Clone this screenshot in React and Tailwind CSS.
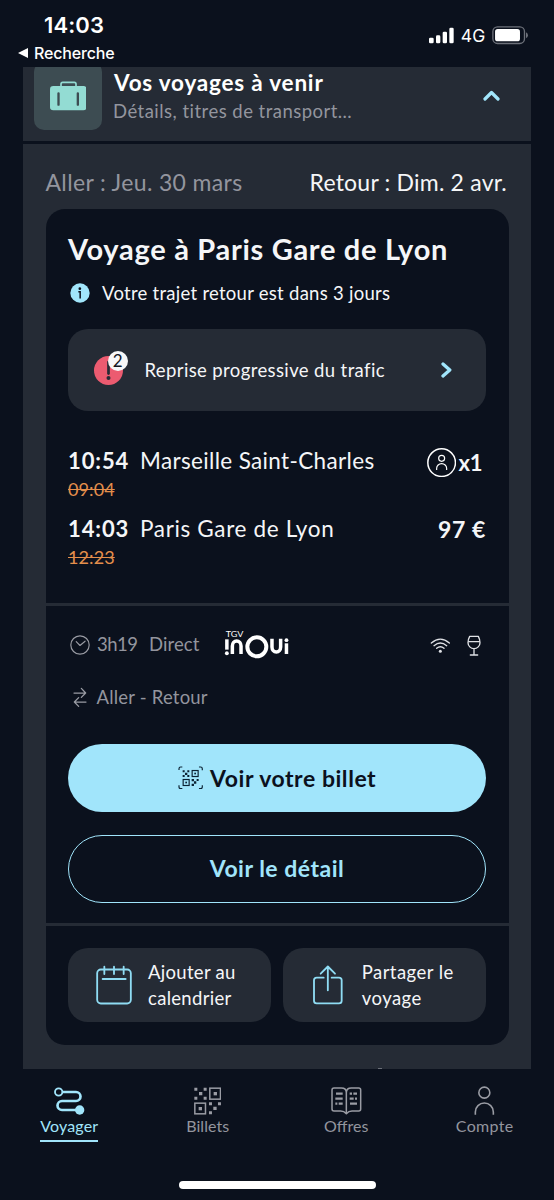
import React from "react";

function SuitcaseIcon() {
  return (
    <svg viewBox="150 242 110 90" className="h-[30px] w-[36.7px]">
      <rect x="183" y="246" width="45" height="24" rx="5" fill="none" stroke="#93dcd3" strokeWidth="5" />
      <rect x="150" y="257" width="110" height="73" rx="10" fill="#93dcd3" />
      <path d="M188 254h35" stroke="#3d4c52" strokeWidth="5" />
      <path d="M175.500 279v34M233.500 279v34" stroke="#3d4c52" strokeWidth="7" strokeLinecap="round" />
    </svg>
  );
}

function StatusIcons() {
  return (
    <div className="flex items-center">
      <svg viewBox="456 80 75 50" className="h-[16.7px] w-[25px]" fill="#fff">
        <rect x="456" y="112" width="14" height="17" rx="4" />
        <rect x="477" y="105" width="13" height="24" rx="4" />
        <rect x="497" y="94" width="13" height="35" rx="4" />
        <rect x="517" y="82" width="13" height="47" rx="4" />
      </svg>
      <span className="ml-[7px] font-['Inter',sans-serif] text-[17.5px] leading-5 tracking-[0.1px]">4G</span>
      <svg viewBox="645 78 110 55" className="ml-[6.5px] h-[18.3px] w-[36.7px]">
        <rect x="647.500" y="80.500" width="95" height="50" rx="14" fill="none" stroke="#6c7079" strokeWidth="4" />
        <rect x="654" y="87" width="75" height="37" rx="8" fill="#fff" />
        <path d="M747 97q6 3 6 9t-6 9z" fill="#6c7079" />
      </svg>
    </div>
  );
}

function InfoIcon() {
  return (
    <svg viewBox="0 0 60 60" className="h-5 w-5">
      <circle cx="30" cy="30" r="29" fill="#a1e5fb" />
      <circle cx="29.500" cy="17" r="4" fill="#0b111d" />
      <path d="M25 26.500h5.500v20" fill="none" stroke="#0b111d" strokeWidth="4.500" />
    </svg>
  );
}

function AlertIcon() {
  return (
    <div className="relative h-[29px] w-[29px]">
      <svg viewBox="0 0 86 86" className="h-[29px] w-[29px]">
        <circle cx="43" cy="43" r="43" fill="#ec5b70" />
        <path d="M43 18v34" stroke="#252b35" strokeWidth="8" strokeLinecap="round" />
        <circle cx="43" cy="65" r="6" fill="#252b35" />
      </svg>
      <span className="absolute -top-[4.5px] left-[14.5px] flex h-[19.500px] w-[19.500px] items-center justify-center rounded-full bg-[#f7f7f8] text-[17px] leading-none text-[#12161f]">2</span>
    </div>
  );
}

function PassengerIcon() {
  return (
    <svg viewBox="450 384 88 88" className="h-[29.3px] w-[29.3px]" fill="none" stroke="#fff">
      <circle cx="494" cy="428" r="41.500" strokeWidth="4.500" />
      <circle cx="494" cy="415" r="9" strokeWidth="3.500" />
      <path d="M479 450v-5a15 14 0 0 1 30 0v5" strokeWidth="3.500" />
    </svg>
  );
}

function ClockIcon() {
  return (
    <svg viewBox="148 105 61 61" className="h-5 w-5" fill="none" stroke="#9a9ca4" strokeWidth="3.500">
      <circle cx="178.500" cy="135.500" r="28" />
      <path d="M167 125l11.500 12L194 124" strokeLinecap="round" strokeLinejoin="round" />
    </svg>
  );
}

function SwapIcon() {
  return (
    <svg viewBox="158 262 42 62" className="h-[20.7px] w-[14px]" fill="none" stroke="#9a9ca4" strokeWidth="3.800" strokeLinecap="round" strokeLinejoin="round">
      <path d="M161 280h35M183 266l13 14-13 13M197 307h-35M175 294l-13 13 13 13" />
    </svg>
  );
}

function InouiLogo() {
  return (
    <svg viewBox="612 90 198 88" className="h-[29.3px] w-[66px]" fill="none" stroke="#fff" strokeWidth="10.500">
      <text x="617" y="111" fontSize="23.500" textLength="53" lengthAdjust="spacingAndGlyphs" fontFamily="Lato, sans-serif" fill="#fff" stroke="none">TGV</text>
      <path d="M620.500 118v31" />
      <circle cx="620.500" cy="160" r="5.800" fill="#fff" stroke="none" />
      <path d="M637 162v-24a13 15 0 0 1 26 0v24" />
      <circle cx="710.500" cy="140.500" r="28.500" strokeWidth="12" />
      <path d="M756 116v25a13 15 0 0 0 26 0v-25" />
      <path d="M799.500 130v32" />
      <circle cx="799.500" cy="120.500" r="5.800" fill="#fff" stroke="none" />
    </svg>
  );
}

function WifiIcon() {
  return (
    <svg viewBox="120 110 62 50" className="h-[16.7px] w-[20.7px]" fill="none" stroke="#dfe1e5" strokeWidth="4" strokeLinecap="round">
      <path d="M124 128q27-23 54 0M132 136q19-16 38 0M140 144q11-10 22 0" />
      <circle cx="151" cy="153" r="4.500" fill="#dfe1e5" stroke="none" />
    </svg>
  );
}

function GlassIcon() {
  return (
    <svg viewBox="231 103 42 64" className="h-[21.3px] w-[14px]" fill="none" stroke="#dfe1e5" strokeWidth="4" strokeLinecap="round" strokeLinejoin="round">
      <path d="M239 107h26q5 9 5 19a18 18 0 0 1-36 0q0-10 5-19zM235 123h34M252 145v18M241 163h22" />
    </svg>
  );
}

function QrIcon() {
  return (
    <svg viewBox="582 79 82 84" className="h-7 w-[27.3px]" fill="#9a9ca4">
      <path d="M583 81h9v9h-9zM611 81h9v9h-9zM597 94h10v10h-10zM583 108h9v9h-9zM611 108h9v9h-9z" />
      <rect x="629.500" y="82.500" width="32" height="33" fill="none" stroke="#9a9ca4" strokeWidth="4.500" />
      <rect x="641" y="94" width="10" height="10" />
      <rect x="584.500" y="127.500" width="32" height="32" fill="none" stroke="#9a9ca4" strokeWidth="4.500" />
      <rect x="596" y="139" width="10" height="10" />
      <path d="M627 125h9v9h-9zM654 125h9v9h-9zM640 138h10v10h-10zM627 152h9v9h-9z" />
    </svg>
  );
}

function ScanIcon() {
  return (
    <svg viewBox="415 110 76 71" className="h-[23.7px] w-[25.3px] text-[#0b2233]">
      <path d="M418 122v-4q0-5 5-5h5M478 113h5q5 0 5 5v5M418 168v5q0 5 5 5h5M478 178h5q5 0 5-5v-5" fill="none" stroke="currentColor" strokeWidth="3.500" />
      <g fill="currentColor">
        <path d="M429 123h6v6h-6zM443 123h6v6h-6zM436 130h7v7h-7zM429 137h6v6h-6zM443 137h6v6h-6z" />
        <rect x="457.500" y="123.500" width="18" height="18" fill="none" stroke="currentColor" strokeWidth="3.500" />
        <rect x="464" y="130" width="5" height="5" />
        <rect x="430.500" y="150.500" width="18" height="18" fill="none" stroke="currentColor" strokeWidth="3.500" />
        <rect x="437" y="157" width="5" height="5" />
        <path d="M456 149h7v7h-7zM471 149h6v6h-6zM463 156h7v7h-7zM456 163h7v7h-7z" />
      </g>
    </svg>
  );
}

function CalendarIcon() {
  return (
    <svg viewBox="227 153 108 119" className="h-[39.7px] w-9" fill="none" stroke="#8fdcf3" strokeWidth="5.500" strokeLinecap="round">
      <rect x="230.500" y="166.500" width="101" height="102" rx="11" />
      <path d="M252 158v22M281 158v22M310 158v22M247 195h69" />
    </svg>
  );
}

function ShareIcon() {
  return (
    <svg viewBox="109 153 90 119" className="h-[39.7px] w-[30px]" fill="none" stroke="#8fdcf3" strokeWidth="5.500" strokeLinecap="round" strokeLinejoin="round">
      <path d="M141 191h-21q-8 0-8 8v61q0 8 8 8h67q8 0 8-8v-61q0-8-8-8h-22M153.500 229v-71M132 179l21.500-21.500L175 179" />
    </svg>
  );
}

function RouteIcon() {
  return (
    <svg viewBox="162 79 92 84" className="h-7 w-[30.7px]" fill="none" stroke="#a1e5fb">
      <circle cx="176" cy="94" r="11" strokeWidth="5.500" />
      <path d="M187 94h41a13.500 13.500 0 0 1 0 27h-42a13.500 13.500 0 0 0 0 27h45" strokeWidth="8" />
      <circle cx="239" cy="148" r="14" fill="#a1e5fb" stroke="none" />
    </svg>
  );
}

function BookIcon() {
  return (
    <svg viewBox="162 79 92 84" className="h-7 w-[30.7px]" fill="none" stroke="#9a9ca4" strokeWidth="4.500">
      <path d="M208 159q-7-8-17-8h-20q-6 0-6-6v-57q0-6 6-6h22q15 0 15 14 0-14 15-14h22q6 0 6 6v57q0 6-6 6h-20q-10 0-17 8zM208 96v62" strokeLinejoin="round" />
      <path d="M177 99h20M175 114h22M175 129h6M185 129h12M218 99h7M229 99h11M218 114h12M234 114h6M219 129h21" strokeWidth="6.500" />
    </svg>
  );
}

function AccountIcon() {
  return (
    <svg viewBox="592 77 62 87" className="h-[29px] w-[20.7px]" fill="none" stroke="#9a9ca4" strokeWidth="4.800">
      <circle cx="623" cy="97" r="16.500" />
      <path d="M596 163v-8a27 27 0 0 1 54 0v8" />
    </svg>
  );
}

function NavItem({ icon, label, labelClass }) {
  return (
    <div className="flex flex-col items-center pt-[17px]">
      <div className="flex h-[29px] items-center">{icon}</div>
      <span className={labelClass}>{label}</span>
    </div>
  );
}

export default function App() {
  return (
    <div className="flex h-[1200px] w-[554px] flex-col overflow-hidden bg-[#0b111d] font-['Lato',sans-serif] text-[#f5f6f8]">
      <header className="flex h-[67px] shrink-0 justify-between pl-[18px] pr-[25.500px] font-['Inter',sans-serif] text-white">
        <div className="pt-[11px]">
          <div className="pl-[26px] text-[22px] font-semibold leading-7 tracking-[0.1px]">14:03</div>
          <div className="flex items-center text-[16px] font-medium leading-7 tracking-[-0.15px]">
            <svg viewBox="0 0 30 30" className="mr-[6px] h-[10px] w-[10px]" fill="#fff">
              <path d="M0 15L30 0v30z" />
            </svg>
            Recherche
          </div>
        </div>
        <div className="pt-[25.500px]">
          <StatusIcons />
        </div>
      </header>

      <main className="relative ml-[23px] flex h-[1002px] w-[508px] shrink-0 flex-col bg-[#252b35]">
        <section className="flex h-[74px] items-end overflow-hidden pl-[11px]">
          <div className="mb-[11.500px] flex h-[68px] w-[68px] shrink-0 items-center justify-center rounded-[10px] bg-[#3d4c52]">
            <SuitcaseIcon />
          </div>
          <div className="mb-[16px] ml-[12px] flex-1">
            <h2 className="text-[22.5px] font-bold leading-7 tracking-[0.8px] text-white">Vos voyages à venir</h2>
            <p className="-ml-px text-[18.5px] leading-7 tracking-[0.47px] text-[#93959e]">Détails, titres de transport…</p>
          </div>
          <svg viewBox="0 0 17 11" className="mb-[40px] mr-[31.500px] h-[11px] w-[17px]" fill="none" stroke="#a1e5fb" strokeWidth="3.200" strokeLinecap="round" strokeLinejoin="round">
            <path d="M2 9l6.500-6.500L15 9" />
          </svg>
        </section>
        <div className="h-[3px] bg-[#0b111d]" />

        <div className="flex justify-between pb-[13px] pl-[22.500px] pr-[24px] pt-[24px] text-[23px] leading-7">
          <span className="tracking-[0.35px] text-[#93959e]">Aller : Jeu. 30 mars</span>
          <span className="tracking-[0.2px]">Retour : Dim. 2 avr.</span>
        </div>

        <article className="ml-[22.500px] mr-[22.500px] h-[836px] rounded-[19px] bg-[#0b111d] pt-[20px]">
          <div className="px-[22.500px]">
            <h1 className="whitespace-nowrap text-[29px] font-bold leading-10 tracking-[0.7px]">Voyage à Paris Gare de Lyon</h1>
            <div className="mt-3 flex h-6 items-center pl-[1.5px]">
              <InfoIcon />
              <span className="ml-[12.500px] text-[18.5px] leading-6 tracking-[0.27px]">Votre trajet retour est dans 3 jours</span>
            </div>
            <div className="mt-6 flex h-[82px] items-center rounded-[20px] bg-[#252b35] pl-[25.500px] pr-[34px]">
              <AlertIcon />
              <span className="ml-[22px] flex-1 pb-[1px] text-[18.5px] leading-6 tracking-[0.38px]">Reprise progressive du trafic</span>
              <svg viewBox="0 0 11 16" className="h-4 w-[11px]" fill="none" stroke="#a1e5fb" strokeWidth="3.300" strokeLinecap="round" strokeLinejoin="round">
                <path d="M2 2l6.800 6L2 14" />
              </svg>
            </div>

            <div className="mt-[36px] flex h-7 items-center">
              <span className="w-[72px] text-[22px] font-bold leading-7 tracking-[0.9px]">10:54</span>
              <span className="flex-1 text-[22.5px] leading-7 tracking-[0.35px]">Marseille Saint-Charles</span>
              <div className="mr-[3.500px] flex items-center pt-[3px]">
                <PassengerIcon />
                <span className="ml-[2px] text-[22px] font-bold leading-7 tracking-[-0.1px]">x1</span>
              </div>
            </div>
            <div className="mt-[1.5px] text-[18px] leading-6 tracking-[0.1px] text-[#e48f4c] line-through">09:04</div>
            <div className="mt-[14.500px] flex h-7 items-center">
              <span className="w-[72px] text-[22px] font-bold leading-7 tracking-[0.9px]">14:03</span>
              <span className="flex-1 text-[22.5px] leading-7 tracking-[0.65px]">Paris Gare de Lyon</span>
              <span className="text-[23px] font-bold leading-7 tracking-[0.6px]">97 €</span>
            </div>
            <div className="mt-[1.5px] text-[18px] leading-6 tracking-[0.1px] text-[#e48f4c] line-through">12:23</div>
          </div>

          <div className="mt-[34.500px] h-[3px] bg-[#252b35]" />

          <div className="px-[22.500px]">
            <div className="mt-[26px] flex h-6 items-center text-[18.5px] leading-6 text-[#93959e]">
              <div className="ml-[1.5px] pt-[2px]">
                <ClockIcon />
              </div>
              <span className="ml-[7.500px] tracking-[-0.5px]">3h19</span>
              <span className="ml-[11.500px] tracking-[0.1px]">Direct</span>
              <div className="ml-[24px] pt-[2px]">
                <InouiLogo />
              </div>
              <div className="ml-auto mr-[5px] flex items-center gap-[16px] pt-[3px]">
                <WifiIcon />
                <GlassIcon />
              </div>
            </div>
            <div className="mt-[28.500px] flex h-6 items-center text-[18.5px] leading-6 text-[#93959e]">
              <div className="ml-[4.500px] pt-[2px]">
                <SwapIcon />
              </div>
              <span className="ml-[10px] tracking-[0.2px]">Aller - Retour</span>
            </div>
            <button className="mt-[35.500px] flex h-[68px] w-full items-center justify-center rounded-full bg-[#a1e5fb] pb-[1px] text-[23px] font-bold leading-7 tracking-[0.55px] text-[#0b111d]">
              <ScanIcon />
              <span className="ml-[7px]">Voir votre billet</span>
            </button>
            <button className="mt-[22.500px] flex h-[68.500px] w-full items-center justify-center rounded-full border-[1.5px] border-[#a1e5fb] pb-[1px] text-[23px] font-bold leading-7 tracking-[0.5px] text-[#a1e5fb]">
              Voir le détail
            </button>
          </div>

          <div className="mt-[19.500px] h-[3px] bg-[#252b35]" />

          <div className="mt-[22.500px] grid grid-cols-2 gap-[11.500px] px-[22.500px]">
            <div className="flex h-[74px] items-center rounded-[20px] bg-[#252b35] pl-[27.500px]">
              <CalendarIcon />
              <span className="ml-[16.500px] pt-[1px] text-[18.5px] leading-[25.500px] tracking-[0.3px]">
                Ajouter au
                <br />
                calendrier
              </span>
            </div>
            <div className="flex h-[74px] items-center rounded-[20px] bg-[#252b35] pl-[30.500px]">
              <ShareIcon />
              <span className="ml-[18.500px] pt-[1px] text-[18.5px] leading-[25.500px] tracking-[0.45px]">
                Partager le
                <br />
                voyage
              </span>
            </div>
          </div>
        </article>
        <span className="absolute bottom-0 left-[355px] h-px w-[4px] bg-[#6c7079]" />
      </main>

      <nav className="grid h-[112px] shrink-0 grid-cols-4 text-[16px] leading-6 text-[#93959e]">
        <NavItem icon={<RouteIcon />} label="Voyager" labelClass="border-b-2 border-[#a1e5fb] pb-[2px] -mt-[1.5px] leading-6 tracking-[0.15px] text-[#a1e5fb]" />
        <NavItem icon={<QrIcon />} label="Billets" labelClass="-mt-[1.5px] leading-6 tracking-[0.05px]" />
        <NavItem icon={<BookIcon />} label="Offres" labelClass="-mt-[1.5px] leading-6" />
        <NavItem icon={<AccountIcon />} label="Compte" labelClass="-mt-[1.5px] leading-6 tracking-[0.34px]" />
      </nav>
      <div className="ml-[178.500px] h-[7.500px] w-[197.500px] shrink-0 rounded-full bg-white" />
    </div>
  );
}
